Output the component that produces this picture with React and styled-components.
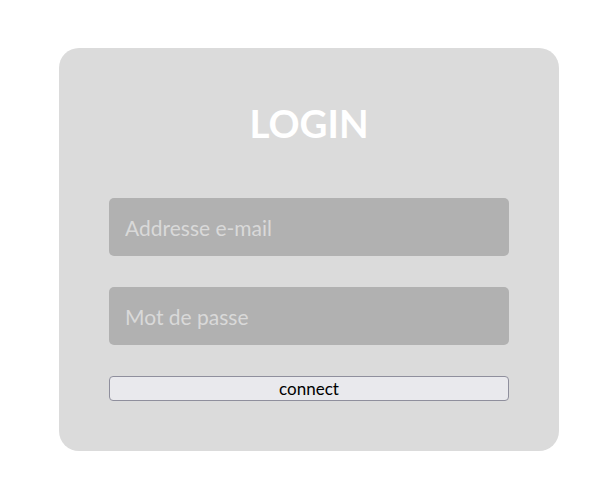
import React from "react";
import styled, { createGlobalStyle } from "styled-components";

const Global = createGlobalStyle`
  html, body { margin: 0; padding: 0; background: #ffffff; }
  body { font-family: "Lato", "Open Sans", sans-serif; }
  * { box-sizing: border-box; }
`;

const Page = styled.div`
  width: 615px;
  height: 491px;
  display: flex;
  justify-content: center;
  padding-top: 48px;
  padding-left: 3px;
`;

const Card = styled.form`
  width: 500px;
  height: 403px;
  background: #dbdbdb;
  border-radius: 20px;
  padding: 50px;
  display: flex;
  flex-direction: column;
`;

const Title = styled.h1`
  margin: 0 0 50px;
  height: 50px;
  line-height: 50px;
  text-align: center;
  color: #ffffff;
  font-family: "Lato", sans-serif;
  font-weight: 700;
  font-size: 38.5px;
`;

const Field = styled.input`
  width: 400px;
  height: 58px;
  border: none;
  outline: none;
  border-radius: 5px;
  background: #b1b1b1;
  padding: 0 16px;
  margin-bottom: 31px;
  font-family: "Lato", sans-serif;
  font-size: 21px;
  color: #ffffff;
  &::placeholder { color: #d9d9d9; }
`;

const Button = styled.button`
  width: 400px;
  height: 25px;
  padding: 0;
  border: 1px solid #8f8f9d;
  border-radius: 4px;
  background: #e9e9ed;
  color: #000000;
  font-family: "Lato", sans-serif;
  font-size: 17px;
  line-height: 23px;
  cursor: pointer;
`;

export default function App() {
  return (
    <>
      <Global />
      <Page>
        <Card onSubmit={(e) => e.preventDefault()}>
          <Title>LOGIN</Title>
          <Field type="email" placeholder="Addresse e-mail" />
          <Field type="password" placeholder="Mot de passe" />
          <Button type="submit">connect</Button>
        </Card>
      </Page>
    </>
  );
}
